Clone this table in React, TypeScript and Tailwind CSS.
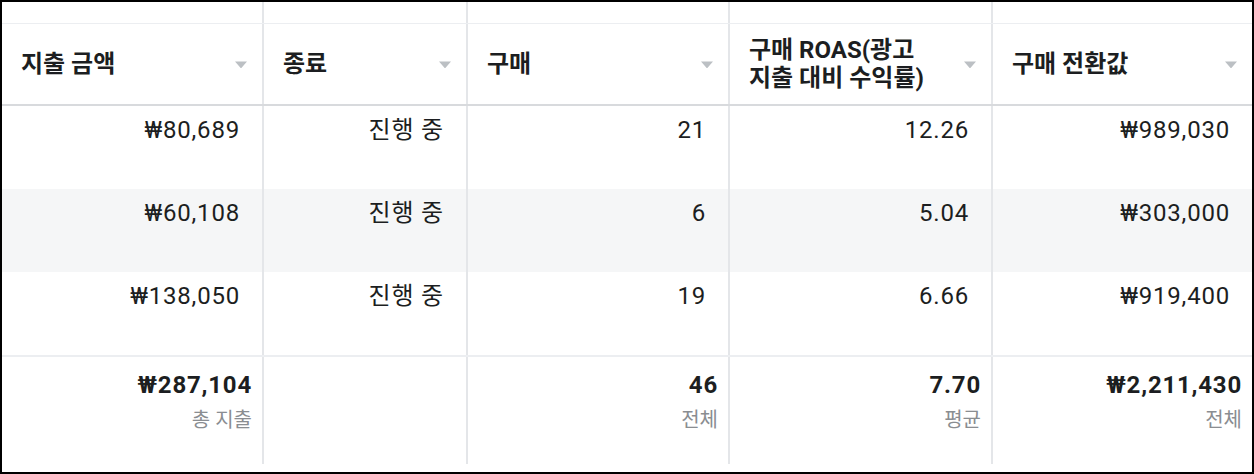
const columns = [
  { label: "지출 금액", width: "w-[262px]" },
  { label: "종료", width: "w-[204px]" },
  { label: "구매", width: "w-[262px]" },
  { label: "구매 ROAS(광고\n지출 대비 수익률)", width: "w-[263px]" },
  { label: "구매 전환값", width: "flex-1" },
];

const rows = [
  ["₩80,689", "진행 중", "21", "12.26", "₩989,030"],
  ["₩60,108", "진행 중", "6", "5.04", "₩303,000"],
  ["₩138,050", "진행 중", "19", "6.66", "₩919,400"],
];

const totals = [
  { value: "₩287,104", note: "총 지출" },
  null,
  { value: "46", note: "전체" },
  { value: "7.70", note: "평균" },
  { value: "₩2,211,430", note: "전체" },
];

const cellBorder = (i: number) =>
  i < columns.length - 1 ? "border-r-2 border-[#e4e6e9]" : "";

function Caret() {
  return (
    <svg width="12" height="7" viewBox="0 0 12 7" className="shrink-0">
      <path d="M0 0.5h12L6.8 6.4a1 1 0 0 1-1.6 0z" fill="#bcc0c4" />
    </svg>
  );
}

export default function App() {
  return (
    <div
      className="box-border h-[474px] w-[1254px] overflow-hidden border-2 border-black bg-white text-[#1c1e21]"
      style={{ fontFamily: 'Roboto, "Noto Sans CJK KR", sans-serif' }}
    >
      {/* blank strip above the header */}
      <div className="flex h-[22px] border-b border-[#eceef1]">
        {columns.map((c, i) => (
          <div key={i} className={`${c.width} ${cellBorder(i)}`} />
        ))}
      </div>

      {/* header */}
      <div className="flex h-[82px] border-b-2 border-[#d8dadd]">
        {columns.map((c, i) => (
          <div
            key={i}
            className={`${c.width} ${cellBorder(i)} flex items-center justify-between pl-[19px] pr-[15px]`}
          >
            <span className="whitespace-pre-line text-[24px] font-bold leading-[28px]">
              {c.label}
            </span>
            <Caret />
          </div>
        ))}
      </div>

      {/* body rows */}
      {rows.map((r, ri) => (
        <div
          key={ri}
          className={`flex h-[83px] ${ri === 1 ? "bg-[#f5f6f7]" : "bg-white"}`}
        >
          {r.map((v, i) => (
            <div
              key={i}
              className={`${columns[i].width} ${cellBorder(i)} pt-[10px] pr-[22px] text-right text-[24px] leading-[28px] tracking-[0.8px]`}
            >
              {v}
            </div>
          ))}
        </div>
      ))}

      {/* totals */}
      <div className="flex h-[109px] border-t-2 border-[#eceef1]">
        {totals.map((t, i) => (
          <div
            key={i}
            className={`${columns[i].width} ${cellBorder(i)} pt-[14px] pr-[10px] text-right`}
          >
            {t && (
              <>
                <div className="text-[24px] font-bold leading-[28px] tracking-[0.8px]">
                  {t.value}
                </div>
                <div className="mt-[8px] text-[20px] leading-[26px] text-[#8a8d91]">
                  {t.note}
                </div>
              </>
            )}
          </div>
        ))}
      </div>
    </div>
  );
}
